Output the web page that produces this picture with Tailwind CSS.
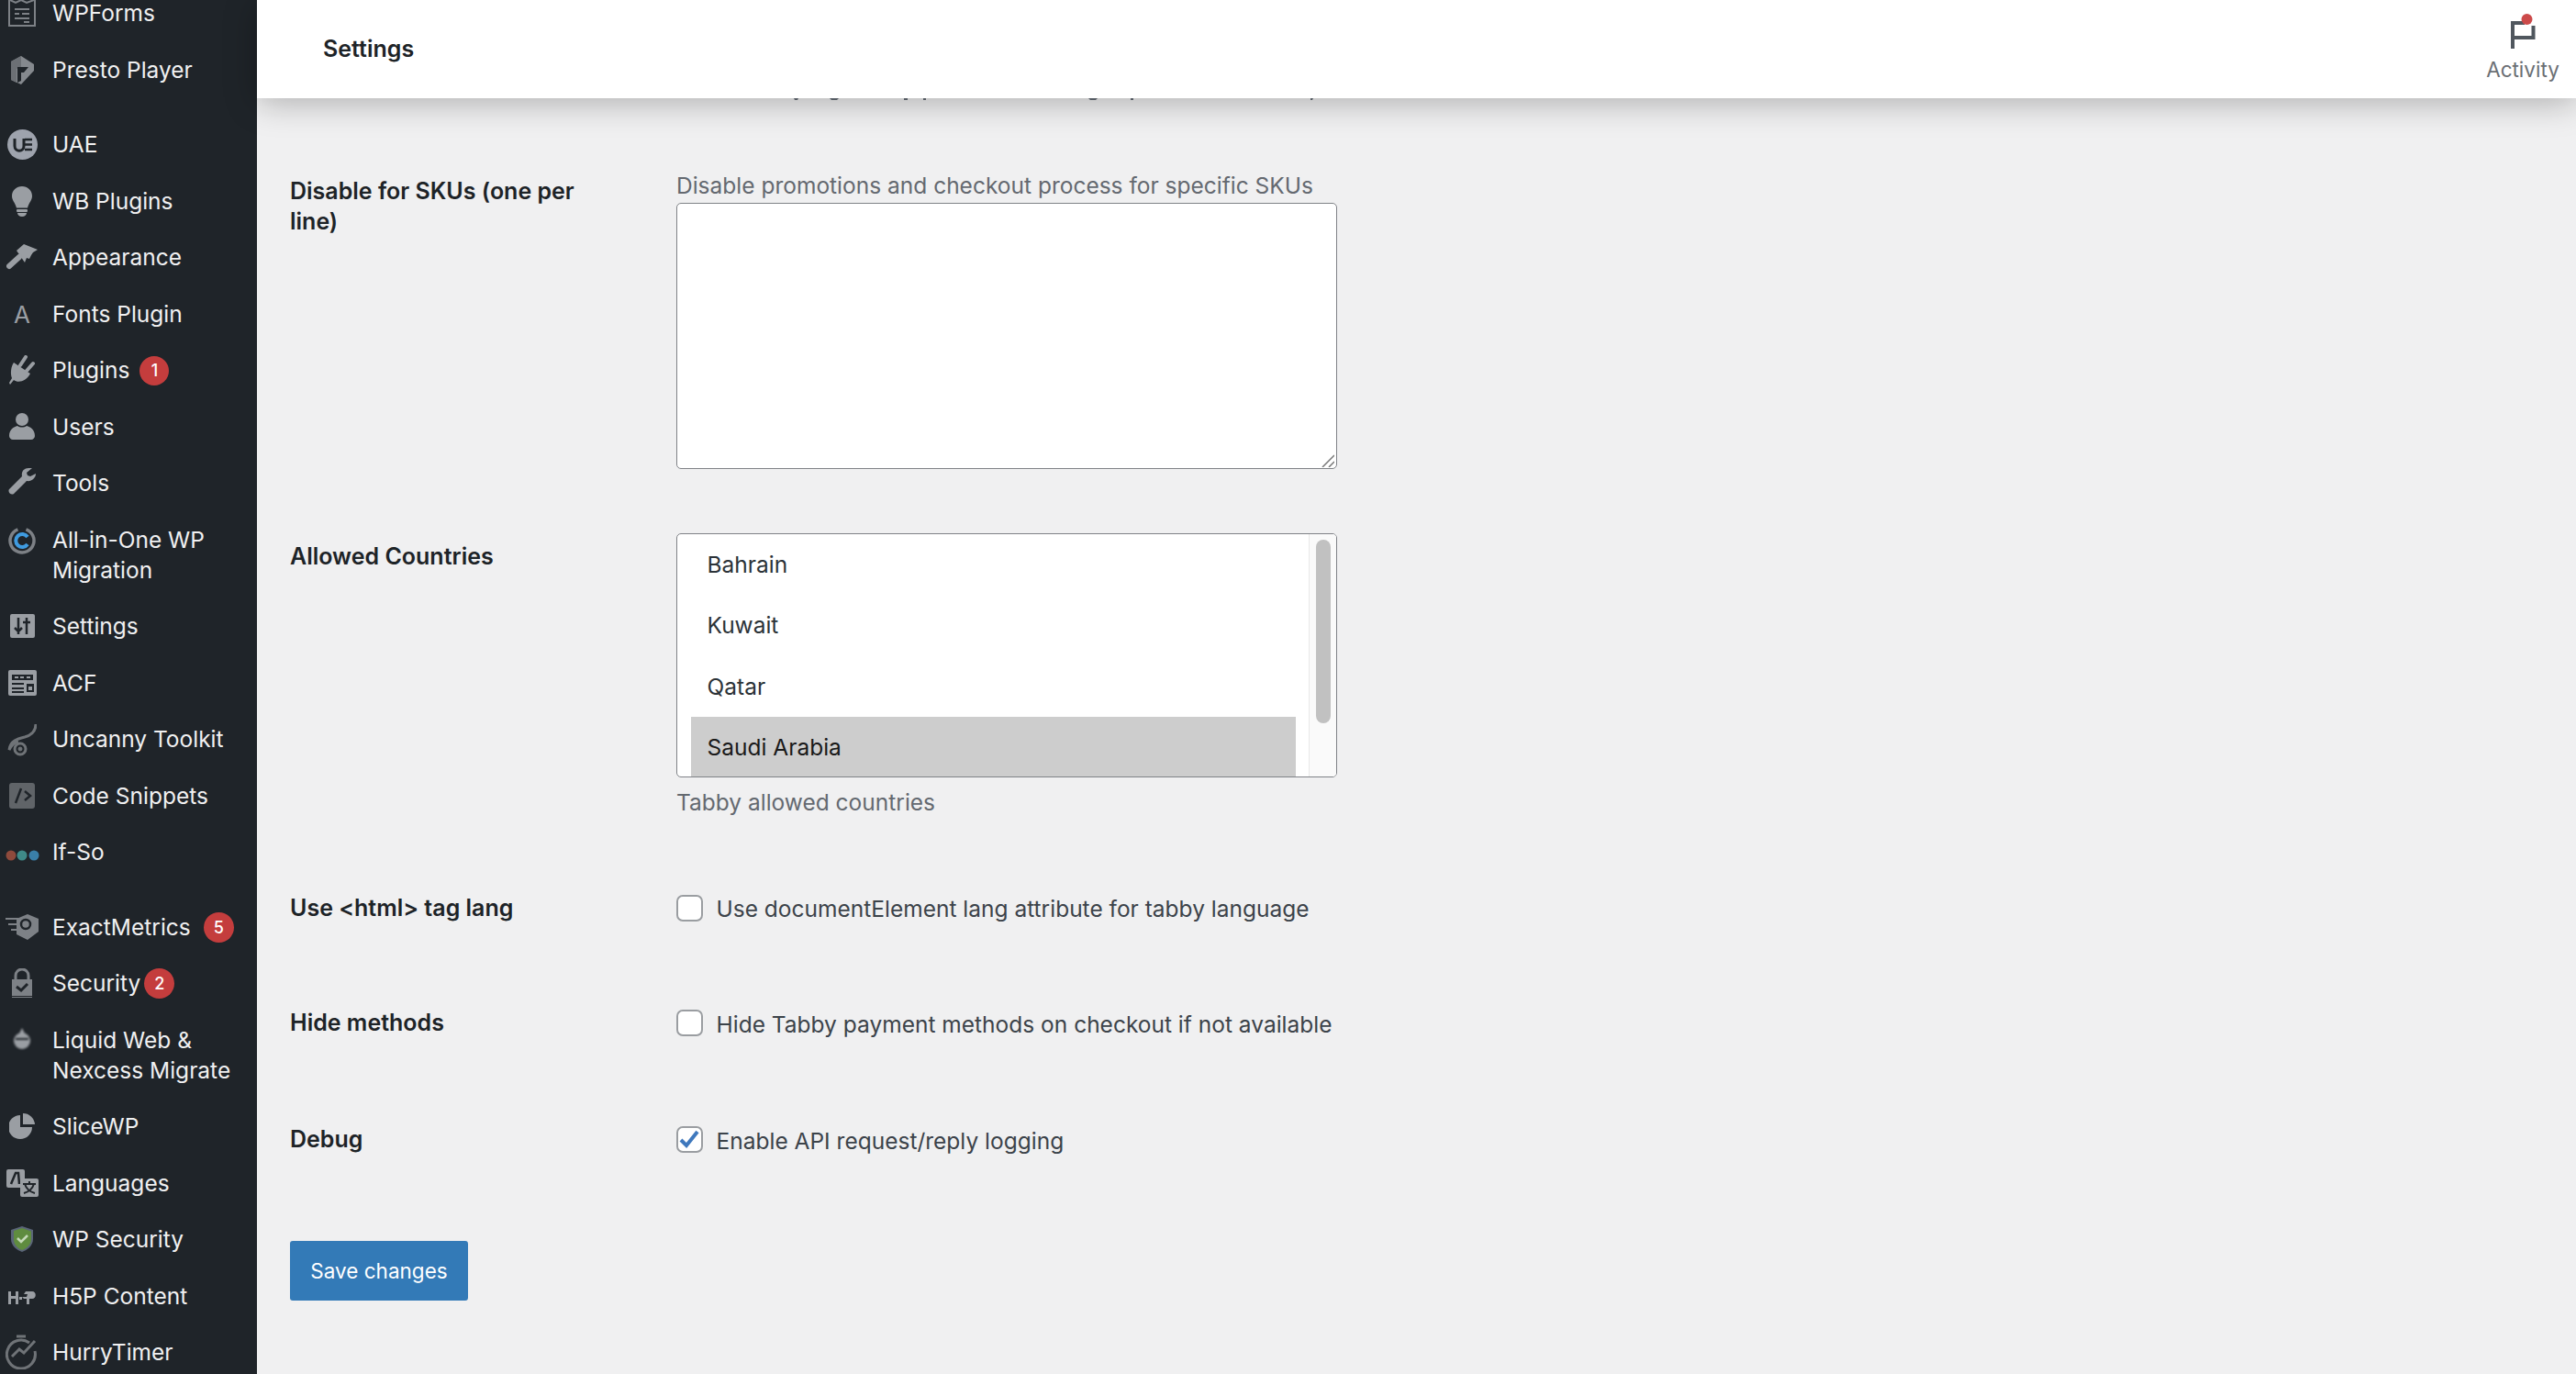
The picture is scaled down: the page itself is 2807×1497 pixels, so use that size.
<!DOCTYPE html>
<html lang="en">
<head>
    <meta charset="UTF-8">
    <title>Settings</title>
    <script src="https://cdn.jsdelivr.net/npm/@tailwindcss/browser@4"></script>
</head>
<body class="bg-[#f0f0f1] font-['Inter',sans-serif] overflow-hidden">
<div class="flex h-[1497px] w-[2807px] overflow-hidden">

    <!-- admin menu -->
    <nav class="w-[280px] shrink-0 bg-[#1f2429] text-[#f0f0f1] text-[24.5px] leading-[33px] overflow-hidden">
        <ul class="-mt-[16px]">
            <li class="flex py-[14.25px]"><span class="w-[57px] h-[33px] shrink-0 flex justify-center pr-[9px]">
                <svg class="w-[32px] h-[33px] overflow-visible" viewBox="0 0 32 33" fill="none" stroke="#7d8186" stroke-width="2"><path d="M2 -4h28v34H2z"/><path d="M3 2l6 3 6-3 6 3 8-3"/><path d="M8 12h16M8 17h5M16 17h8M8 22h16M18 26h6"/></svg>
            </span>WPForms</li>
            <li class="flex py-[14.25px]"><span class="w-[57px] h-[33px] shrink-0 flex justify-center pr-[9px]">
                <svg class="w-[30px] h-[33px]" viewBox="0 0 30 33"><path d="M14 1l14 9v7L14 32 3 27V7z" fill="#85898e"/><path d="M3 7l11-6v12l-5 2v15l-6-3z" fill="#6c7075"/><path d="M10 13h12l-5 6h-3v9l-4 2z" fill="#1f2429"/></svg>
            </span>Presto Player</li>
            <li class="mt-[20px] flex py-[14.25px]"><span class="w-[57px] h-[33px] shrink-0 flex justify-center pr-[9px]">
                <svg class="w-[33px] h-[33px]" viewBox="0 0 33 33"><circle cx="16.500" cy="16.500" r="16.500" fill="#9ea3ad"/><path d="M8 10v8c0 7 10 7 10 0v-8" fill="none" stroke="#1f2429" stroke-width="3"/><path d="M19 11h8M19 16.500h8M19 22h8" stroke="#1f2429" stroke-width="2.500"/></svg>
            </span>UAE</li>
            <li class="flex py-[14.25px]"><span class="w-[57px] h-[33px] shrink-0 flex justify-center pr-[9px]">
                <svg class="w-[24px] h-[33px]" viewBox="0 0 24 33" fill="#9a9ea3"><path d="M12 0c6 0 11 4.500 11 10.500 0 5-3.500 7-5 13H6c-1.500-6-5-8-5-13C1 4.500 6 0 12 0z"/><rect x="6" y="25" width="12" height="3" rx="1"/><path d="M7 29h10c0 2-2 4-5 4s-5-2-5-4z"/></svg>
            </span>WB Plugins</li>
            <li class="flex py-[14.25px]"><span class="w-[57px] h-[33px] shrink-0 flex justify-center pr-[9px]">
                <svg class="w-[34px] h-[28px] mt-[2px]" viewBox="0 0 34 28" fill="#9a9ea3"><path d="M11 7L19 0l15 6-5 3-2 3-2 4-3-1-2 5z"/><path d="M14 14L3 24" stroke="#9a9ea3" stroke-width="6" stroke-linecap="round"/></svg>
            </span>Appearance</li>
            <li class="flex py-[14.25px]"><span class="w-[57px] h-[33px] shrink-0 flex justify-center pr-[9px] text-[#9a9ea3] text-[26px]">A</span>Fonts Plugin</li>
            <li class="flex py-[14.25px]"><span class="w-[57px] h-[33px] shrink-0 flex justify-center pr-[9px]">
                <svg class="w-[30px] h-[33px]" viewBox="0 0 30 33" fill="#9a9ea3"><path d="M19 2l-6 9M27 9l-7 8" stroke="#9a9ea3" stroke-width="4" stroke-linecap="round"/><path d="M6 8l18 12c-4 8-13 11-18 7l-4 5-1-2 3-5C2 20 3 12 6 8z"/></svg>
            </span><span>Plugins</span><span class="ml-[11px] mt-[1px] w-[32px] h-[32px] rounded-full bg-[#c43d3d] text-white text-[18px] font-medium leading-[32px] text-center">1</span></li>
            <li class="flex py-[14.25px]"><span class="w-[57px] h-[33px] shrink-0 flex justify-center pr-[9px]">
                <svg class="w-[28px] h-[30px]" viewBox="0 0 28 30" fill="#9a9ea3"><circle cx="14" cy="8" r="7"/><path d="M0 26c0-7 5-10 9-11 3 2 7 2 10 0 4 1 9 4 9 11 0 2-2 4-4 4H4c-2 0-4-2-4-4z"/></svg>
            </span>Users</li>
            <li class="flex py-[14.25px]"><span class="w-[57px] h-[33px] shrink-0 flex justify-center pr-[9px]">
                <svg class="w-[30px] h-[30px]" viewBox="0 0 30 30" fill="#9a9ea3"><path d="M22 0c-5 0-8 4-7 9L1 23c-2 3 2 7 5 5L20 14c5 1 10-3 10-8l-6 3-3-1-1-3 6-5z"/></svg>
            </span>Tools</li>
            <li class="flex py-[14.25px]"><span class="w-[57px] h-[33px] shrink-0 flex justify-center pr-[9px]">
                <svg class="w-[30px] h-[33px]" viewBox="0 0 30 33" fill="none"><circle cx="15" cy="17" r="13" stroke="#7d8186" stroke-width="3.500" stroke-dasharray="72 10" transform="rotate(-70 15 17)"/><path d="M21 13a7 7 0 1 0 0 8" stroke="#3f9be0" stroke-width="4"/></svg>
            </span><span>All-in-One WP<br>Migration</span></li>
            <li class="flex py-[14.25px]"><span class="w-[57px] h-[33px] shrink-0 flex justify-center pr-[9px]">
                <svg class="w-[27px] h-[26px] mt-[3px]" viewBox="0 0 27 26"><rect width="27" height="26" rx="2" fill="#9a9ea3"/><path d="M9 4v18M5 15l4 4 4-4M18 22V4M14 9h8" fill="none" stroke="#1f2429" stroke-width="2.500"/></svg>
            </span>Settings</li>
            <li class="flex py-[14.25px]"><span class="w-[57px] h-[33px] shrink-0 flex justify-center pr-[9px]">
                <svg class="w-[31px] h-[28px] mt-[2px]" viewBox="0 0 31 28"><rect width="31" height="28" rx="2" fill="#9a9ea3"/><path d="M4 5h23v6H4zM4 14h13v2H4zM4 19h13v2H4zM4 23h13v2H4zM20 15h8v9h-8z" fill="#1f2429"/><path d="M7 7h4v2H7zM13 7h4v2h-4zM20 7h4v2h-4zM22 18h4v4h-4z" fill="#9a9ea3"/></svg>
            </span>ACF</li>
            <li class="flex py-[14.25px]"><span class="w-[57px] h-[33px] shrink-0 flex justify-center pr-[9px]">
                <svg class="w-[32px] h-[36px] shrink-0" viewBox="0 0 32 36" fill="none" stroke="#6f7377"><path d="M31 0c0 8-5 12-12 14-8 2-16 4-17 14 2-4 5-8 10-9" stroke-width="3"/><circle cx="14" cy="27" r="6" stroke-width="3"/><circle cx="14" cy="27" r="2" fill="#6f7377"/></svg>
            </span>Uncanny Toolkit</li>
            <li class="flex py-[14.25px]"><span class="w-[57px] h-[33px] shrink-0 flex justify-center pr-[9px]">
                <svg class="w-[28px] h-[28px] mt-[2px]" viewBox="0 0 28 28"><rect width="28" height="28" rx="3" fill="#606468"/><path d="M13 6L7 22M17 9l6 5-6 5" fill="none" stroke="#1f2429" stroke-width="2.500"/></svg>
            </span>Code Snippets</li>
            <li class="flex py-[14.25px]"><span class="w-[57px] h-[33px] shrink-0 flex justify-center pr-[9px]">
                <svg class="w-[37px] h-[33px]" viewBox="0 0 37 33"><circle cx="6" cy="20" r="5.500" fill="#8f4a3c"/><circle cx="18" cy="20" r="5.500" fill="#3f8a88"/><circle cx="31" cy="20" r="5.500" fill="#3a7fa8"/></svg>
            </span>If-So</li>
            <li class="mt-[20px] flex py-[14.25px]"><span class="w-[57px] h-[33px] shrink-0 flex justify-center pr-[9px]">
                <svg class="w-[36px] h-[30px] mt-[1px]" viewBox="0 0 36 30"><path d="M12 6l12-5 12 5v14l-12 9-12-6z" fill="#7d8186"/><path d="M0 6h14M3 12h10M6 18h10" stroke="#7d8186" stroke-width="2"/><circle cx="22" cy="12" r="5" fill="none" stroke="#1f2429" stroke-width="2.500"/></svg>
            </span><span>ExactMetrics</span><span class="ml-[14px] w-[33px] h-[33px] rounded-full bg-[#c43d3d] text-white text-[18px] font-medium leading-[33px] text-center">5</span></li>
            <li class="flex py-[14.25px]"><span class="w-[57px] h-[33px] shrink-0 flex justify-center pr-[9px]">
                <svg class="w-[24px] h-[33px]" viewBox="0 0 24 33"><path d="M5 13V8a7 7 0 0 1 14 0v5" fill="none" stroke="#7d8186" stroke-width="3"/><path d="M1 12h22v18H1z" fill="#7d8186"/><path d="M1 31.500h22" stroke="#7d8186"/><path d="M6 20l5 4 7-7" fill="none" stroke="#1f2429" stroke-width="3"/></svg>
            </span><span>Security</span><span class="ml-[4px] w-[33px] h-[33px] rounded-full bg-[#c43d3d] text-white text-[18px] font-medium leading-[33px] text-center">2</span></li>
            <li class="flex py-[14.25px]"><span class="w-[57px] h-[33px] shrink-0 flex justify-center pr-[9px]">
                <svg class="w-[20px] h-[24px] mt-[3px] blur-[1px]" viewBox="0 0 20 24" fill="#9a9ea3"><path d="M10 0l3 6h-6z"/><circle cx="10" cy="14" r="9"/><path d="M3 12h14" stroke="#1f2429" stroke-width="2"/></svg>
            </span><span>Liquid Web &amp;<br>Nexcess Migrate</span></li>
            <li class="flex py-[14.25px]"><span class="w-[57px] h-[33px] shrink-0 flex justify-center pr-[9px]">
                <svg class="w-[28px] h-[28px] mt-[2px]" viewBox="0 0 28 28" fill="#9a9ea3"><path d="M12 2a13 13 0 1 0 13 13H12z"/><path d="M15 0a13 13 0 0 1 13 12H15z"/></svg>
            </span>SliceWP</li>
            <li class="flex py-[14.25px]"><span class="w-[57px] h-[33px] shrink-0 flex justify-center pr-[9px]">
                <svg class="w-[35px] h-[30px] mt-[1px]" viewBox="0 0 35 30"><rect width="20" height="20" rx="2" fill="#9a9ea3"/><path d="M5 16l5-12h3l1 12" fill="none" stroke="#1f2429" stroke-width="2.500"/><rect x="15" y="10" width="20" height="20" rx="2" fill="#9a9ea3"/><path d="M18 16h14M25 13v3M20 16c2 6 7 9 11 10M30 16c-2 6-7 9-11 10" fill="none" stroke="#1f2429" stroke-width="2"/></svg>
            </span>Languages</li>
            <li class="flex py-[14.25px]"><span class="w-[57px] h-[33px] shrink-0 flex justify-center pr-[9px]">
                <svg class="w-[24px] h-[28px] mt-[2px]" viewBox="0 0 24 28"><path d="M12 0l12 4v10c0 7-6 12-12 14C6 26 0 21 0 14V4z" fill="#5a6478"/><path d="M12 2l10 3.500V14c0 6-5 10-10 12C7 24 3 20 3 14V5z" fill="#5f8c3f"/><path d="M7 13l4 4 7-7" fill="none" stroke="#c5d9b8" stroke-width="2.500"/></svg>
            </span>WP Security</li>
            <li class="flex py-[14.25px]"><span class="w-[57px] h-[33px] shrink-0 flex justify-center pr-[9px]">
                <svg class="w-[30px] h-[14px] mt-[11px]" viewBox="0 0 30 14" fill="#9a9ea3"><path d="M0 0h3v5h5V0h3v14H8V8H3v6H0z"/><path d="M19 0h7c5 0 5 8 0 8h-3v6h-3V8h-3l-2-2h5l1-3h-4z"/><path d="M12 6h3v3h-3z"/></svg>
            </span>H5P Content</li>
            <li class="flex py-[14.25px]"><span class="w-[57px] h-[33px] shrink-0 flex justify-center pr-[9px]">
                <svg class="w-[36px] h-[38px] shrink-0 -mt-[3px]" viewBox="0 0 36 38" fill="none" stroke="#6f7377" stroke-width="3"><path d="M26 9a15.500 15.500 0 1 0 6 9"/><path d="M12 2h10M7 24l8-8 5 4 12-13"/></svg>
            </span>HurryTimer</li>
        </ul>
    </nav>

    <div class="relative flex-1 min-w-0">
        <!-- top bar -->
        <header class="relative z-10 flex justify-between h-[107px] bg-white shadow-[0_5px_36px_rgba(0,0,0,0.28)]">
            <h1 class="pl-[72px] pt-[37px] text-[25px] leading-[33px] font-semibold text-[#1d2327]">Settings</h1>
            <div class="flex flex-col items-center w-[98px] mr-[9px] pt-[15px] text-[#6b6f74] text-[22.5px] leading-[33px]">
                <svg class="w-[33px] h-[38px]" viewBox="0 0 33 38" fill="none" stroke="#50575e" stroke-width="4"><path d="M5 38V10h13M5 26h22.500V13"/><circle cx="20.500" cy="6" r="6" fill="#cc4a4a" stroke="none"/></svg>
                <span class="mt-[6px]">Activity</span>
            </div>
        </header>
        <!-- bottom of the row scrolled under the bar -->
        <svg class="absolute z-20 left-[580px] top-[107px] w-[580px] h-[3px]" viewBox="0 0 580 3" fill="#555b63"><path d="M5 0h5l-1 2H6zM44 0h10l-2 2h-6zM125 0h4v2h-4zM146 0h3v2h-3zM326 0h10l-2 2h-6zM372 0h3v2h-3zM568 0h3l-1 2h-2z"/></svg>

        <!-- form -->
        <form class="pl-[36px] pt-[79px] text-[24.5px] leading-[33px]">
            <div class="grid grid-cols-[421px_721px]">
                <label class="pt-[6px] pr-[80px] text-[25px] font-semibold text-[#1d2327]">Disable for SKUs (one per line)</label>
                <div class="relative">
                    <p class="text-[#646970]">Disable promotions and checkout process for specific SKUs</p>
                    <textarea class="mt-[2px] block w-[720px] h-[290px] resize-none rounded-[5px] border border-[#7f8287] bg-white"></textarea>
                    <svg class="absolute right-[4px] bottom-[2px] w-[14px] h-[14px]" viewBox="0 0 14 14" fill="none" stroke="#777" stroke-width="1.5"><path d="M1 14L14 1M8 14l6-6"/></svg>
                </div>
            </div>

            <div class="mt-[70px] grid grid-cols-[421px_721px]">
                <label class="pt-[9px] text-[25px] font-semibold text-[#1d2327]">Allowed Countries</label>
                <div>
                    <div class="flex w-[720px] h-[266px] overflow-hidden rounded-[5px] border border-[#7f8287] bg-white text-[#2c3338]">
                        <ul class="flex-1 pl-[15px] pr-[14px]">
                            <li class="h-[66.3px] pl-[17.5px] leading-[66px]">Bahrain</li>
                            <li class="h-[66.3px] pl-[17.5px] leading-[66px]">Kuwait</li>
                            <li class="h-[66.3px] pl-[17.5px] leading-[66px]">Qatar</li>
                            <li class="h-[66.3px] pl-[17.5px] leading-[66px] bg-[#cdcdcd] text-[#1a1a1a]">Saudi Arabia</li>
                        </ul>
                        <div class="w-[30px] shrink-0 border-l border-[#e8e8e8] bg-[#fafafa] pl-[7px] pt-[6px]">
                            <div class="w-[16px] h-[200px] rounded-full bg-[#c1c1c1]"></div>
                        </div>
                    </div>
                    <p class="mt-[11px] text-[#646970]">Tabby allowed countries</p>
                </div>
            </div>

            <div class="mt-[84px] grid grid-cols-[421px_721px]">
                <label class="-mt-[2px] text-[25px] font-semibold text-[#1d2327]">Use &lt;html&gt; tag lang</label>
                <label class="flex gap-[14.5px] text-[#3c434a] whitespace-nowrap">
                    <span class="shrink-0 w-[29px] h-[29px] rounded-[7px] border-2 border-[#9a9da1] bg-white"></span>
                    <span class="-mt-[1px]">Use documentElement lang attribute for tabby language</span>
                </label>
            </div>

            <div class="mt-[93px] grid grid-cols-[421px_721px]">
                <label class="-mt-[2px] text-[25px] font-semibold text-[#1d2327]">Hide methods</label>
                <label class="flex gap-[14.5px] text-[#3c434a] whitespace-nowrap">
                    <span class="shrink-0 w-[29px] h-[29px] rounded-[7px] border-2 border-[#9a9da1] bg-white"></span>
                    Hide Tabby payment methods on checkout if not available
                </label>
            </div>

            <div class="mt-[94px] grid grid-cols-[421px_721px]">
                <label class="-mt-[2px] text-[25px] font-semibold text-[#1d2327]">Debug</label>
                <label class="flex gap-[14.5px] text-[#3c434a] whitespace-nowrap">
                    <span class="shrink-0 w-[29px] h-[29px] rounded-[7px] border-2 border-[#9a9da1] bg-white">
                        <svg class="w-[25px] h-[25px]" viewBox="0 0 25 25" fill="none" stroke="#3f78bd" stroke-width="4"><path d="M3 13l6 6L21 4"/></svg>
                    </span>
                    Enable API request/reply logging
                </label>
            </div>

            <button type="button" class="mt-[92px] block w-[194px] h-[65px] rounded-[3px] bg-[#337ab7] text-white text-[22.5px]">Save changes</button>
        </form>
    </div>
</div>
</body>
</html>
